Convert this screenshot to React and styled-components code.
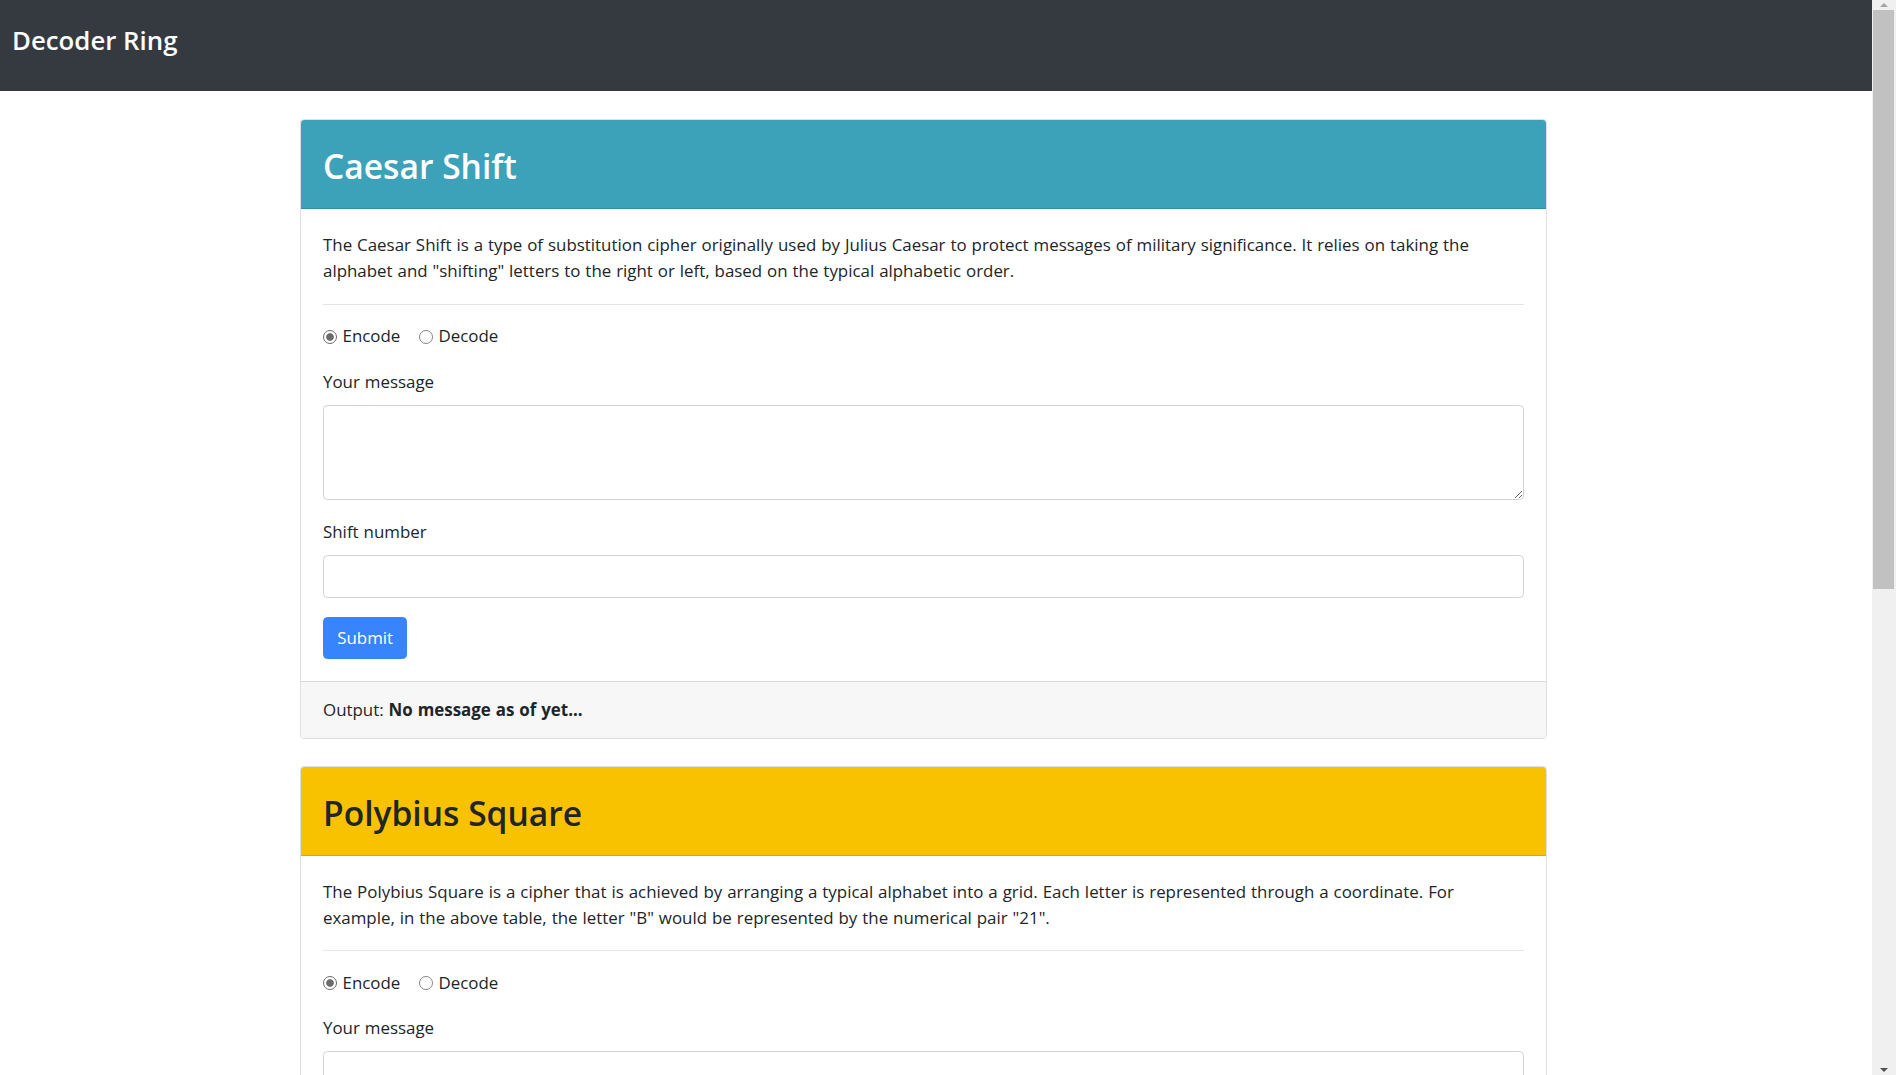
import React from "react";
import styled, { createGlobalStyle } from "styled-components";

const GlobalStyle = createGlobalStyle`
  *, *::before, *::after { box-sizing: border-box; }
  html, body { margin: 0; padding: 0; background: #fff; overflow: hidden; }
  body {
    font-family: "Open Sans", "Liberation Sans", sans-serif;
    font-size: 16.9px;
    line-height: 26.4px;
    word-spacing: 0.55px;
    color: #212529;
  }
`;

const Viewport = styled.div`
  display: flex;
  height: 100vh;
  overflow: hidden;
`;

const Page = styled.div`
  flex: 1;
  min-width: 0;
  overflow: hidden;
`;

const ScrollRail = styled.div`
  flex: 0 0 24px;
  display: flex;
  flex-direction: column;
  background: #f0f0f0;
`;

const ScrollArrow = styled.div`
  flex: 0 0 10px;
  display: flex;
  align-items: center;
  justify-content: center;
  margin-top: ${(p) => (p.$dir === "down" ? "auto" : "0")};
  &::before {
    content: "";
    border-left: 4.5px solid transparent;
    border-right: 4.5px solid transparent;
    ${(p) =>
      p.$dir === "down"
        ? "border-top: 4px solid #505050;"
        : "border-bottom: 4px solid #a3a3a3;"}
  }
`;

const ScrollThumb = styled.div`
  height: 579px;
  margin: 0 2px 0 1px;
  background: #c1c1c1;
`;

const Navbar = styled.nav`
  height: 91px;
  background: #343a40;
  padding: 23.5px 12px 0;
`;

const Brand = styled.a`
  display: inline-block;
  color: #fff;
  font-size: 25.8px;
  font-weight: 600;
  line-height: 32px;
  word-spacing: 0;
  text-decoration: none;
`;

const Main = styled.main`
  padding: 28px 0 2px 300px;
`;

const Card = styled.section`
  width: 1247px;
  margin-bottom: 27px;
  background: #fff;
  border: 1px solid rgba(0, 0, 0, 0.125);
  border-radius: 4.4px;
  overflow: hidden;
`;

const CardHeader = styled.header`
  background: ${(p) => p.$bg};
  color: ${(p) => p.$fg};
  padding: 25px 22px 21px;
  border-bottom: 1px solid rgba(0, 0, 0, 0.125);
`;

const Title = styled.h2`
  margin: 0;
  font-size: 33.6px;
  font-weight: 600;
  line-height: 42px;
  word-spacing: 0;
`;

const CardBody = styled.div`
  padding: 23px 22px 22px;
`;

const Description = styled.p`
  margin: 0;
`;

const Divider = styled.hr`
  margin: 19px 0 18.5px;
  border: 0;
  border-top: 1px solid rgba(0, 0, 0, 0.1);
`;

const Form = styled.form`
  display: flex;
  flex-direction: column;
  gap: 19px;
`;

const RadioRow = styled.div`
  display: flex;
  align-items: center;
  gap: 18.6px;
`;

const RadioLabel = styled.label`
  display: inline-flex;
  align-items: center;
  gap: 5.5px;
`;

const Radio = styled.input.attrs({ type: "radio" })`
  appearance: none;
  width: 14px;
  height: 14px;
  margin: 0;
  border-radius: 50%;
  border: 1px solid #858585;
  background: #fff;
  &:checked {
    border-color: #6b6b6b;
    background: radial-gradient(circle, #6b6b6b 0 3.4px, #fff 4.2px);
  }
`;

const Field = styled.div`
  display: flex;
  flex-direction: column;
  gap: 9.8px;
`;

const FieldLabel = styled.label``;

const TextArea = styled.textarea`
  display: block;
  width: 100%;
  height: 95px;
  padding: 6.6px 13.2px;
  font: inherit;
  color: #495057;
  border: 1px solid #ced4da;
  border-radius: 4.4px;
  resize: vertical;
`;

const TextInput = styled.input`
  display: block;
  width: 100%;
  height: 42.4px;
  padding: 6.6px 13.2px;
  font: inherit;
  color: #495057;
  border: 1px solid #ced4da;
  border-radius: 4.4px;
`;

const SubmitButton = styled.button`
  align-self: flex-start;
  padding: 7.1px 13.2px;
  font: inherit;
  line-height: 26.4px;
  color: #fff;
  background: #3884fd;
  border: 1px solid #3884fd;
  border-radius: 4.4px;
`;

const CardFooter = styled.div`
  background: #f7f7f7;
  border-top: 1px solid rgba(0, 0, 0, 0.125);
  padding: 14.5px 22px;
`;

const Strong = styled.strong`
  font-weight: 700;
`;

function CipherCard({ title, bg, fg, description, children, name }) {
  return (
    <Card>
      <CardHeader $bg={bg} $fg={fg}>
        <Title>{title}</Title>
      </CardHeader>
      <CardBody>
        <Description>{description}</Description>
        <Divider />
        <Form onSubmit={(e) => e.preventDefault()}>
          <RadioRow>
            <RadioLabel>
              <Radio name={name} defaultChecked />
              Encode
            </RadioLabel>
            <RadioLabel>
              <Radio name={name} />
              Decode
            </RadioLabel>
          </RadioRow>
          <Field>
            <FieldLabel>Your message</FieldLabel>
            <TextArea />
          </Field>
          {children}
          <SubmitButton type="submit">Submit</SubmitButton>
        </Form>
      </CardBody>
      <CardFooter>
        Output: <Strong>No message as of yet...</Strong>
      </CardFooter>
    </Card>
  );
}

export default function App() {
  return (
    <>
      <GlobalStyle />
      <Viewport>
        <Page>
          <Navbar>
            <Brand href="#">Decoder Ring</Brand>
          </Navbar>
          <Main>
            <CipherCard
              name="caesar"
              title="Caesar Shift"
              bg="#3ca2b9"
              fg="#fff"
              description={
                'The Caesar Shift is a type of substitution cipher originally used by Julius Caesar to protect messages of military significance. It relies on taking the alphabet and "shifting" letters to the right or left, based on the typical alphabetic order.'
              }
            >
              <Field>
                <FieldLabel>Shift number</FieldLabel>
                <TextInput type="number" />
              </Field>
            </CipherCard>
            <CipherCard
              name="polybius"
              title="Polybius Square"
              bg="#f8c200"
              fg="#212529"
              description={
                'The Polybius Square is a cipher that is achieved by arranging a typical alphabet into a grid. Each letter is represented through a coordinate. For example, in the above table, the letter "B" would be represented by the numerical pair "21".'
              }
            />
            <CipherCard
              name="substitution"
              title="Substitution Cipher"
              bg="#3ba55c"
              fg="#fff"
              description={
                "The Substitution Cipher requires a standard alphabet and a substitution alphabet. Letters from the standard alphabet will be transposed to the standard alphabet. This cipher requires that the recipient have the substitution alphabet, otherwise it will be difficult for them to decode the message."
              }
            >
              <Field>
                <FieldLabel>Substitution alphabet</FieldLabel>
                <TextInput type="text" />
              </Field>
            </CipherCard>
          </Main>
        </Page>
        <ScrollRail aria-hidden="true">
          <ScrollArrow $dir="up" />
          <ScrollThumb />
          <ScrollArrow $dir="down" />
        </ScrollRail>
      </Viewport>
    </>
  );
}
